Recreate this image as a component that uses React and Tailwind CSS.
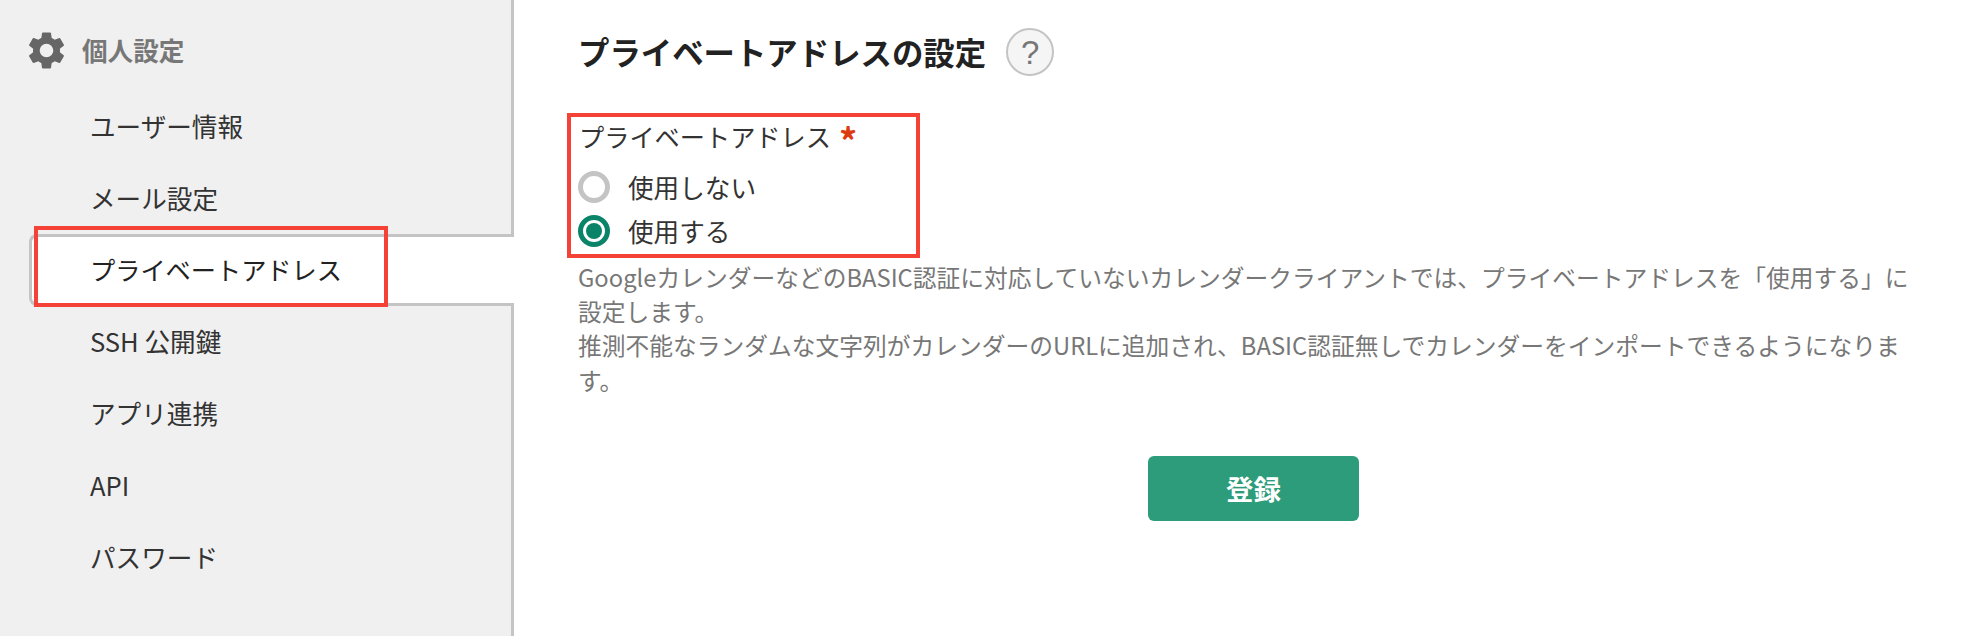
import { MdSettings } from 'react-icons/md';

const menuItems = ['ユーザー情報', 'メール設定', 'プライベートアドレス', 'SSH 公開鍵', 'アプリ連携', 'API', 'パスワード'];

const Sidebar = () => (
  <aside className="w-[514px] shrink-0 min-h-[636px] bg-[#f0f0f0] border-r-[3px] border-[#c4c4c4]">
    <div className="flex items-center h-[90px] pl-[24px] pt-[10px] text-[#777] text-[25.6px] font-semibold">
      <MdSettings className="w-[45px] h-[45px] mr-[13px] text-[#666]" />
      <span>個人設定</span>
    </div>
    {menuItems.map((item, index) =>
      index === 2 ? (
        <div
          key={index}
          className="relative z-10 flex items-center h-[72px] ml-[29px] -mr-[3px] pl-[58px] -mb-px bg-white border-y-[3px] border-l-[3px] border-[#c4c4c4] rounded-l-lg text-[25.2px] text-[#222]"
        >
          {item}
          <div className="absolute left-[2px] -top-[11px] w-[354px] h-[81px] border-4 border-[#f44336]" />
        </div>
      ) : (
        <div key={index} className="flex items-center h-[72px] pl-[90px] text-[25.6px] text-[#333]">
          {item}
        </div>
      )
    )}
  </aside>
);

const Radio = ({ label, checked }) => (
  <label className="flex items-center h-[44px] -ml-px text-[25.6px] text-[#333]">
    <span
      className={`flex items-center justify-center w-[32px] h-[32px] mr-[18px] rounded-full border-[5px] ${
        checked ? 'border-[#0a8468]' : 'border-[#c4c4c4]'
      }`}
    >
      {checked && <span className="w-[16px] h-[16px] rounded-full bg-[#0a8468]" />}
    </span>
    {label}
  </label>
);

const App = () => {
  return (
    <div className="flex h-[636px] overflow-hidden bg-white font-['Noto_Sans_CJK_JP',sans-serif]">
      <Sidebar />
      <main className="flex-1 pl-[64px] pr-[57px]">
        <div className="flex items-center h-[113px] pb-[9px]">
          <h1 className="text-[31.4px] font-bold text-[#222]">プライベートアドレスの設定</h1>
          <button className="flex items-center justify-center w-[48px] h-[48px] ml-[20px] rounded-full border-2 border-[#c4c4c4] bg-[#f5f5f5] font-['Liberation_Sans',sans-serif] text-[33px] leading-none text-[#777]">
            ?
          </button>
        </div>
        <div className="relative w-[353px] h-[145px] -ml-[11px] pl-[12px]">
          <div className="flex items-center h-[48px] mb-[4px] text-[25.2px] text-[#333]">
            プライベートアドレス
            <span className="ml-[8px] mt-[3px] text-[36px] leading-none font-bold text-[#dd3b10]">*</span>
          </div>
          <Radio label="使用しない" />
          <Radio label="使用する" checked />
          <div className="absolute inset-0 border-4 border-[#f44336]" />
        </div>
        <p className="mt-[2px] text-[23.75px] leading-[34.2px] text-[#777]">
          GoogleカレンダーなどのBASIC認証に対応していないカレンダークライアントでは、プライベートアドレスを「使用する」に設定します。
          <br />
          推測不能なランダムな文字列がカレンダーのURLに追加され、BASIC認証無しでカレンダーをインポートできるようになります。
        </p>
        <div className="flex justify-center mt-[59px] pl-[14px]">
          <button className="w-[211px] h-[65px] rounded-md bg-[#2d9c7b] text-[27.5px] font-bold text-white">登録</button>
        </div>
      </main>
    </div>
  );
};

export default App;
